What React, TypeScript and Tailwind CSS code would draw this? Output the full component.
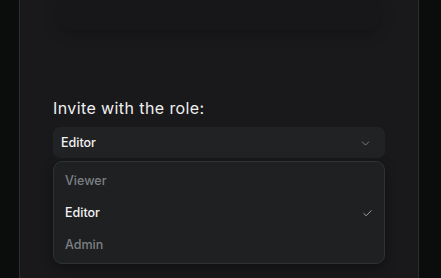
import { Check, ChevronDown } from "lucide-react";

const roles = ["Viewer", "Editor", "Admin"];

export default function App() {
  const selected = "Editor";

  return (
    <div className="flex h-[278px] w-[441px] overflow-hidden bg-[#0b0c0c] pl-[19px] pr-[22px] font-['Inter',sans-serif]">
      <div className="flex flex-1 flex-col border-x border-[#2a302e] bg-[#19191b] px-[33px]">
        {/* faded card above, mostly scrolled out */}
        <div className="mx-[4px] h-[30px] rounded-b-2xl bg-[#171719] shadow-[0_6px_14px_rgba(0,0,0,0.18)]" />

        <h2 className="mt-[66px] text-[16px] leading-[24px] font-normal tracking-[0.4px] text-[#f0f0f0]">Invite with the role:</h2>

        <button className="mt-[7px] flex h-[31px] items-center justify-between rounded-[7px] bg-[#212224] pt-[2px] pl-[8px] pr-[13px] text-[12.5px] font-medium text-[#f2f2f2]">
          <span>{selected}</span>
          <ChevronDown size={13} strokeWidth={1.6} className="text-[#85898c]" />
        </button>

        <div className="mt-[3px] flex flex-col rounded-[9px] border border-[#2d3331] bg-[#1f2022] pt-[3px] pb-[2px] shadow-[0_4px_12px_rgba(0,0,0,0.35)]">
          {roles.map((r) => (
            <div
              key={r}
              className={
                r === selected
                  ? "flex h-[32px] items-center justify-between pl-[11px] pr-[11px] text-[12.5px] font-medium text-[#f2f2f2]"
                  : "flex h-[32px] items-center justify-between pl-[11px] pr-[11px] text-[12.5px] font-medium text-[#7c8084]"
              }
            >
              <span>{r}</span>
              {r === selected && <Check size={11} strokeWidth={1.8} className="text-[#b8babc]" />}
            </div>
          ))}
        </div>
      </div>
    </div>
  );
}
